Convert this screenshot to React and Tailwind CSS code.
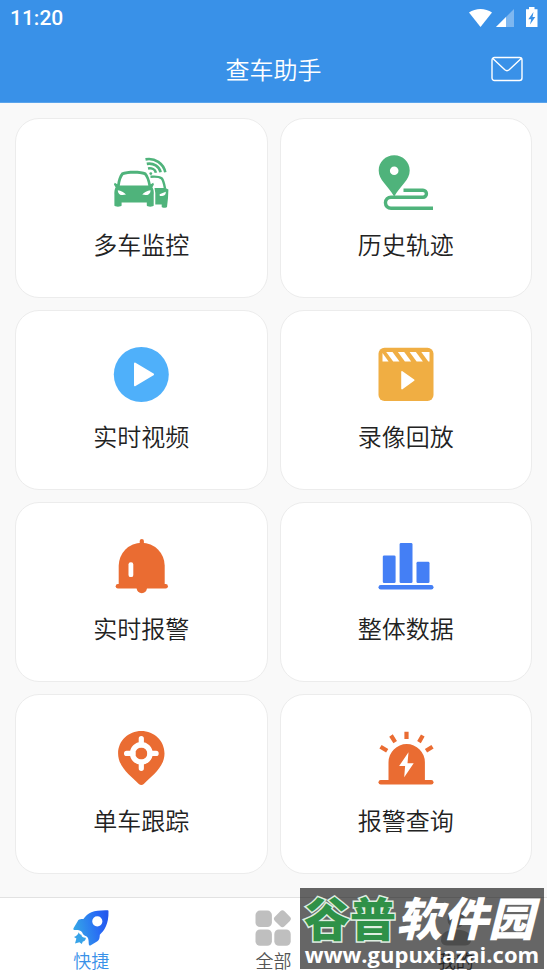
import React from 'react'
import { useState } from 'react';

const CarsIcon = () => (
  <svg viewBox="0 0 56 56" className="w-14 h-14" fill="none" aria-hidden="true">
    <g stroke="#4fb37b" strokeWidth="2.6">
      <path d="M32.5 4.4C42 2.6 50.5 8.5 52.3 17.3" />
      <path d="M33.8 8.9C40.5 7.6 46.3 11.5 47.6 17.3" />
      <path d="M35 13.5C38.8 12.8 42.2 14.6 42.9 17.8" />
    </g>
    <circle cx="37.8" cy="18.6" r="1.4" fill="#4fb37b" />
    <path d="M37.5 21.8C42 21.4 46.5 21.8 48.5 23.2C50.4 25.2 51.3 29.5 52 33.5" stroke="#4fb37b" strokeWidth="2.4" />
    <path d="M41.5 33H52.5L55.4 34.6L55 43L54 52C53.8 53 49 53 48.7 52V49.6H42.3V38Z" fill="#4fb37b" />
    <path d="M46.6 39.2L52.8 36.8C52.8 40.2 51.3 41.2 46.8 41Z" fill="#fff" />
    <path fillRule="evenodd" d="M8.6 17.5C14 15 28 15 33 17.5C35.6 20.5 37 25 37.8 29.3L40.2 27.8L40.9 29.6L39.4 32.2C40.7 34.4 41 37 40.7 40V50.5C40.7 52 33.8 52 33.8 50.5V47.6H8.6V50.5C8.6 52 1.4 52 1.4 50.5V40C1.2 37 1.5 34.4 2.6 32.2L.9 29.6L1.8 27.8L4.2 29.3C4.8 25 6 20.5 8.6 17.5ZM10.4 20C8.6 22.2 7.4 26 6.8 30.4H35.3C34.6 26 33.2 22.2 31.3 20C27 18.2 15 18.2 10.4 20Z" fill="#4fb37b" />
    <path d="M4.8 35.2C8 35.7 11 37 13 39.6C8.6 40.8 5 40 4.8 35.2ZM37.6 35.2C34.2 35.7 31.2 37 29.2 39.6C33.6 40.8 37.4 40 37.6 35.2Z" fill="#fff" />
  </svg>
)

const TrackIcon = () => (
  <svg viewBox="0 0 56 56" className="w-14 h-14" fill="none" aria-hidden="true">
    <path d="M25.5 35.3H45A3.4 3.4 0 0 1 45 42.2H13A5.5 5.5 0 0 0 13 53.3H55" stroke="#4fb37b" strokeWidth="3.4" />
    <path fillRule="evenodd" d="M16.2.3C7.5.3.7 7 .7 15.4C.7 25 9.500 30 16.2 41.5C22.9 30 31.7 25 31.7 15.4C31.7 7 24.9.3 16.2.3ZM16.2 11.4A4.3 4.3 0 1 1 16.2 20A4.3 4.3 0 1 1 16.2 11.4Z" fill="#4fb37b" />
  </svg>
)

const PlayIcon = () => (
  <svg viewBox="0 0 56 56" className="w-14 h-14" aria-hidden="true">
    <circle cx="28.3" cy="27.5" r="27.5" fill="#4fb0fa" />
    <path d="M22 16.6L40 27.4L22 38.2Z" fill="#fff" stroke="#fff" strokeWidth="2" strokeLinejoin="round" />
  </svg>
)

const FilmIcon = () => (
  <svg viewBox="0 0 56 56" className="w-14 h-14" aria-hidden="true">
    <rect x=".5" y=".8" width="55" height="53.2" rx="6" fill="#f0ae43" />
    <g fill="#fff">
      <path d="M4.5 6V14.4H10.6Z" />
      <path d="M8.2 5H14.5L21.5 14.4H15.2Z" />
      <path d="M19.9 5H26.2L33.2 14.4H26.9Z" />
      <path d="M31.6 5H37.9L44.9 14.4H38.6Z" />
      <path d="M43.3 5H51.5V14.4H50.3Z" />
      <path d="M24 24.8L35.7 33.2L24 41.6Z" stroke="#fff" strokeWidth="1.6" strokeLinejoin="round" />
    </g>
  </svg>
)

const BellIcon = () => (
  <svg viewBox="0 0 56 56" className="w-14 h-14" fill="#ea6c32" aria-hidden="true">
    <rect x="26.7" y="0" width="4.2" height="8" rx="2.1" />
    <path d="M5.7 47V26.7A23 23 0 0 1 51.7 26.7V47Z" />
    <rect x="2.7" y="45" width="52.2" height="4.4" rx="2.2" />
    <circle cx="28.8" cy="49.2" r="5.1" />
    <rect x="15.5" y="23.3" width="4.8" height="14.8" rx="2.2" fill="#fff" />
  </svg>
)

const ChartIcon = () => (
  <svg viewBox="0 0 56 56" className="w-14 h-14" fill="#447ff5" aria-hidden="true">
    <rect x="4.8" y="16.4" width="12.8" height="27.7" rx="1.4" />
    <rect x="21.6" y="4" width="12.9" height="40.1" rx="1.4" />
    <rect x="38.5" y="22.8" width="13" height="21.3" rx="1.4" />
    <rect x=".5" y="46" width="55" height="4.4" rx="2.2" />
  </svg>
)

const TargetIcon = () => (
  <svg viewBox="0 0 56 56" className="w-14 h-14" aria-hidden="true">
    <path d="M28.3 0C15.5 0 5.1 9.8 5.1 22.4C5.1 36 17.5 44.5 25.8 53Q28.3 55 30.8 53C39.1 44.5 51.5 36 51.5 22.4C51.5 9.8 41.1 0 28.3 0Z" fill="#ea6c32" />
    <circle cx="28.3" cy="22.4" r="8.7" fill="none" stroke="#fff" strokeWidth="5.4" />
    <path d="M28.3 7.6V14M28.3 31V37.3M13.6 22.4H20M37 22.4H43.1" stroke="#fff" strokeWidth="5.2" strokeLinecap="round" />
  </svg>
)

const SirenIcon = () => (
  <svg viewBox="0 0 56 56" className="w-14 h-14" aria-hidden="true">
    <path d="M28.5 .7V8.1M13 4.5L17.2 11.1M41 11.1L44.8 4.5M2.5 15.7L9.2 19.8M48 19.8L54.5 15.7" stroke="#ea6c32" strokeWidth="4.2" fill="none" />
    <path d="M10.5 50V31.3A18.2 18.2 0 0 1 46.9 31.3V50Z" fill="#ea6c32" />
    <rect x=".5" y="49" width="55" height="4.4" rx="2.2" fill="#ea6c32" />
    <path d="M30.5 21.3L21.1 35H27.1L26.2 46.3L35.7 32.2H29.5Z" fill="#fff" />
  </svg>
)

const RocketIcon = () => (
  <svg viewBox="0 0 36 36" className="w-9 h-9" aria-hidden="true">
    <defs>
      <linearGradient id="rocket" x1="0" y1="0.6" x2="1" y2="0.4">
        <stop offset="0" stopColor="#36a9e6" />
        <stop offset="0.75" stopColor="#2768f5" />
        <stop offset="1" stopColor="#2558ec" />
      </linearGradient>
    </defs>
    <path fill="url(#rocket)" fillRule="evenodd" d="M34.5.3C28 .1 22.5.8 18.4 2.2C15 3.6 12.4 6.2 10.4 9C8.5 8.9 6.6 9.2 5.4 10L.5 18.2C.1 19.2.6 20 1.6 20C4.6 19.8 8 20.2 9.2 22.6C10 24.8 11.6 25.8 13.2 26.2C15.6 27.4 15.7 30.6 15.8 34.2C15.9 35.4 16.8 35.9 17.8 35.3L24.4 31.3C26.6 29.6 26.6 27.6 26.8 24.8C31.2 20.8 35.9 14 35.5 1.3C35.5.6 35.2.3 34.5.3ZM24.3 6.2A5.1 5.1 0 1 1 24.3 16.4A5.1 5.1 0 1 1 24.3 6.2Z" />
    <path d="M5.8 22.2C4.8 24.6 3.4 26.2 1 27L3.4 28.6L2 33.5L6.4 32.2L8.8 34L9.8 31.6C11.4 31.4 12.8 30 12.9 27.8C10.6 28 8.6 27.2 8.4 24.8C7 24.6 6.2 23.6 5.8 22.2Z" fill="#37a3e8" />
  </svg>
)

const GridIcon = () => (
  <svg viewBox="0 0 36 36" className="w-9 h-9" fill="#bfbfbf" aria-hidden="true">
    <rect x=".5" y=".6" width="16.4" height="16.4" rx="4.5" />
    <rect x=".5" y="19.4" width="16.4" height="16.4" rx="4.5" />
    <rect x="19.3" y="19.4" width="16.4" height="16.4" rx="4.5" />
    <rect x="20.6" y="2" width="13.6" height="13.6" rx="3" transform="rotate(45 27.4 8.8)" />
  </svg>
)

const UserIcon = () => (
  <svg viewBox="0 0 36 36" className="w-9 h-9" fill="#bfbfbf" aria-hidden="true">
    <circle cx="18" cy="9.4" r="8.6" />
    <path d="M3 30C3 23 9 19.6 18 19.6S33 23 33 30C33 34 30 35.6 26 35.6H10C6 35.6 3 34 3 30Z" />
  </svg>
)

const menus = [
  { title: '多车监控', icon: <CarsIcon /> },
  { title: '历史轨迹', icon: <TrackIcon /> },
  { title: '实时视频', icon: <PlayIcon /> },
  { title: '录像回放', icon: <FilmIcon /> },
  { title: '实时报警', icon: <BellIcon /> },
  { title: '整体数据', icon: <ChartIcon /> },
  { title: '单车跟踪', icon: <TargetIcon /> },
  { title: '报警查询', icon: <SirenIcon /> },
]

const tabs = [
  { title: '快捷', icon: <RocketIcon /> },
  { title: '全部', icon: <GridIcon /> },
  { title: '我的', icon: <UserIcon /> },
]

function StatusBar() {
  return (
    <div className="flex h-9 items-center justify-between pl-[10px] pr-2">
      <span className="font-['Roboto',sans-serif] text-[21px] font-medium leading-9">11:20</span>
      <svg viewBox="0 0 70 22" className="w-[70px] h-[22px]" fill="#fff" aria-hidden="true">
        <path d="M0 5.6C6.5.9 16.5.9 23 5.6L11.5 20Z" />
        <path d="M45 2V20H27Z" opacity=".35" />
        <path d="M37 10V20H27Z" />
        <path fillRule="evenodd" d="M60 0H65.5V2.3H68.5V20H57V2.3H60ZM64.5 5L59.3 12.3H62.2L61 17.5L66.3 10H63.5Z" />
      </svg>
    </div>
  )
}

function App() {
  const [active, setActive] = useState(0);

  return (
    <div className="relative flex min-h-screen flex-col bg-[#f9f9f9] font-['Noto_Sans_CJK_SC',sans-serif]">
      <header className="border-b border-[#5aa4ec] bg-[#3991e8] text-white">
        <StatusBar />
        <div className="grid grid-cols-[1fr_auto_1fr] items-center h-[66px] px-6">
          <h1 className="col-start-2 text-2xl font-[350]">查车助手</h1>
          <button type="button" aria-label="消息" className="justify-self-end">
            <svg viewBox="0 0 32 26" className="w-8 h-[26px]" fill="none" stroke="#fff" strokeWidth="1.4" aria-hidden="true">
              <rect x="1" y="1.5" width="30" height="23" rx="2.5" />
              <path d="M1.8 2.4L13.8 13.8Q16 15.6 18.2 13.8L30.2 2.4" />
            </svg>
          </button>
        </div>
      </header>

      <main className="grid flex-1 grid-cols-2 content-start gap-3 px-[15px] pt-[15px] pb-4">
        {menus.map((item) => (
          <button
            key={item.title}
            type="button"
            className="flex flex-col items-center gap-[15px] rounded-3xl border border-[#ececec] bg-white pt-[36px] pb-[35px]"
          >
            {item.icon}
            <span className="text-2xl font-[350] leading-9 text-[#222]">{item.title}</span>
          </button>
        ))}
      </main>

      <nav className="grid grid-cols-3 border-t border-[#e2e2e2] bg-white pt-3">
        {tabs.map((tab, i) => (
          <button
            key={tab.title}
            type="button"
            onClick={() => setActive(i)}
            className={`flex flex-col items-center ${active === i ? 'text-[#3991e8]' : 'text-[#555]'}`}
          >
            {tab.icon}
            <span className="text-lg font-[350] leading-7">{tab.title}</span>
          </button>
        ))}
      </nav>

      <div className="pointer-events-none absolute bottom-[5px] right-[3px] w-[244px] h-[81px] bg-black/60 whitespace-nowrap">
        <div className="flex h-[54px] pl-1 text-[46px] font-black leading-[56px]">
          <span className="text-[#2f9148] [-webkit-text-stroke:3px_#dfeee2] [paint-order:stroke_fill]">谷普</span>
          <span className="italic text-white">软件园</span>
        </div>
        <div className="text-center font-['Open_Sans',sans-serif] text-[22px] font-bold leading-6 text-white">www.gupuxiazai.com</div>
      </div>
    </div>
  )
}

export default App
